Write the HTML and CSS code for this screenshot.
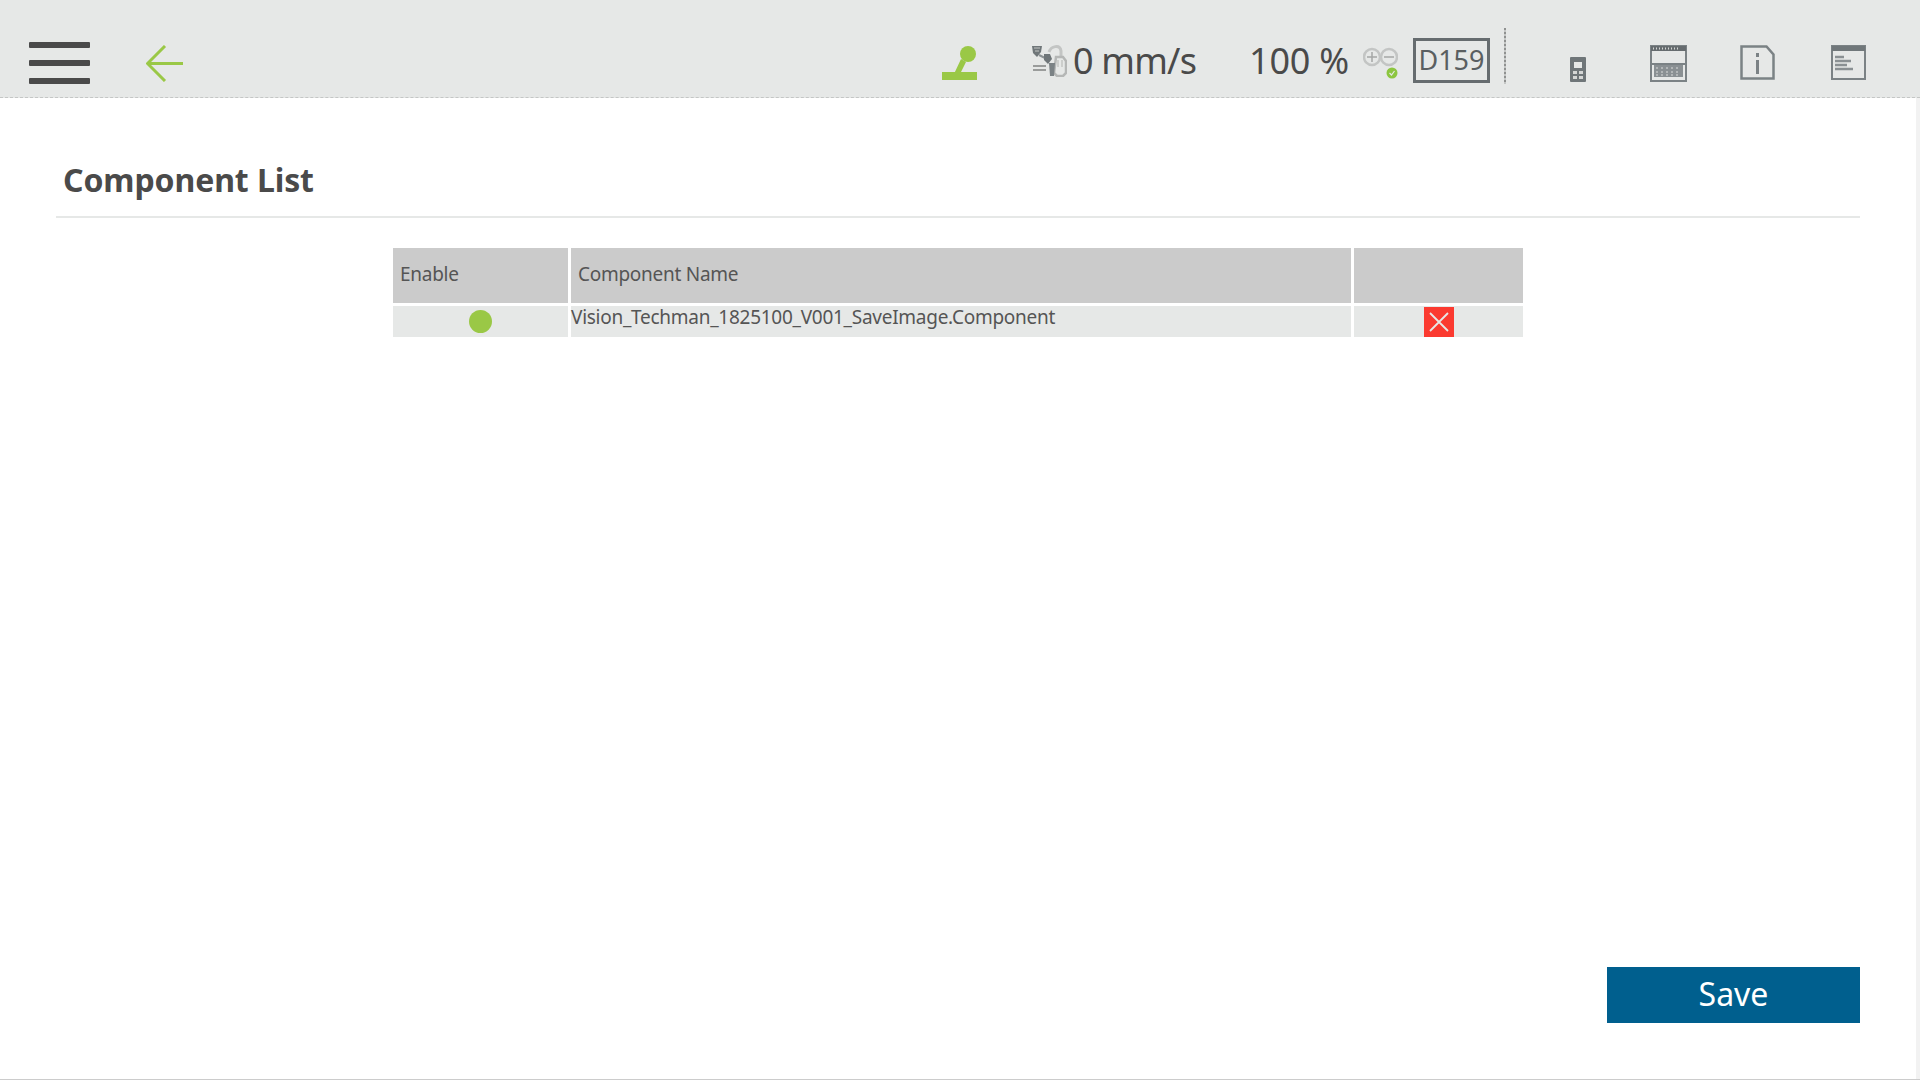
FILE: index.html
```html
<!DOCTYPE html>
<html lang="en">
<head>
<meta charset="utf-8">
<title>Component List</title>
<link rel="stylesheet" href="styles.css">
</head>
<body>
<div class="page">
  <header class="topbar">
    <svg class="ic-menu" width="61" height="42" viewBox="0 0 61 42"><g fill="#4a4a4a"><rect y="0" width="61" height="6" rx="1"/><rect y="18" width="61" height="6" rx="1"/><rect y="36" width="61" height="6" rx="1"/></g></svg>
    <svg class="ic-back" width="38" height="37" viewBox="0 0 38 37"><path d="M37 18.500H2M19 1 1.500 18.500 19 36" fill="none" stroke="#9ac846" stroke-width="3"/></svg>
    <svg class="ic-robot" width="35" height="35" viewBox="0 0 35 35"><g fill="#9ac846"><circle cx="26" cy="8" r="8"/><path d="M19 13l5 3-6 12h-6z"/><rect x="0" y="26" width="35" height="8"/></g></svg>
    <svg class="ic-speed" width="36" height="32" viewBox="0 0 36 32"><g fill="none"><path d="M1 1h10l-1 6-4 5-4-4z" fill="#6f7679"/><path d="M3 3h6M4 6h4" stroke="#c3c5c4"/><path d="M8 10l6 3" stroke="#8a9093" stroke-width="2"/><path d="M13 9h6l2 5-4 5-4-4z" fill="#6f7679"/><path d="M18 7c2-6 11-8 12-1v7" stroke="#c3c5c4" stroke-width="3"/><path d="M25 12h7l3 4v12l-3 3h-6l-3-3z" stroke="#b5b7b6" stroke-width="2.500"/><path d="M27 15v7M31 15v7" stroke="#c3c5c4" stroke-width="1.500"/><path d="M18 18h6l-1 13h-4z" fill="#7b8285"/><path d="M2 21h13M2 25h13" stroke="#9a9c9b" stroke-width="2"/></g></svg>
    <span class="speed">0 mm/s</span>
    <span class="percent">100 %</span>
    <svg class="ic-mode" width="35" height="32" viewBox="0 0 35 32"><g fill="none" stroke="#c3c5c4" stroke-width="2.500"><circle cx="9" cy="10" r="8"/><circle cx="26" cy="10" r="8"/></g><path d="M4 10h10M9 5v10M21 10h10" fill="none" stroke="#a5a7a6" stroke-width="1.500"/><circle cx="29" cy="26" r="5.500" fill="#8cc63f"/><path d="M26.500 26l2 2 3-4" fill="none" stroke="#e6e8e7" stroke-width="1.200"/></svg>
    <span class="code">D159</span>
    <span class="vline"></span>
    <svg class="ic-pendant" width="16" height="25" viewBox="0 0 16 25"><rect width="16" height="25" rx="1" fill="#6f7679"/><rect x="4" y="5" width="8" height="6" fill="#e6e8e7"/><g fill="#d4d6d5"><rect x="3" y="14" width="4" height="3"/><rect x="9" y="14" width="4" height="3"/><rect x="3" y="19" width="4" height="3"/><rect x="9" y="19" width="4" height="3"/></g></svg>
    <svg class="ic-console" width="37" height="37" viewBox="0 0 37 37"><rect x="1" y="1" width="35" height="35" fill="none" stroke="#7b8285" stroke-width="2"/><rect x="1" y="1" width="35" height="5" fill="#666c6f"/><path d="M3 3.500h27" stroke="#d4d6d5" stroke-width="2" stroke-dasharray="1 2"/><rect x="2" y="18" width="33" height="2" fill="#7b8285"/><rect x="4" y="20" width="29" height="12" fill="#8a9093"/><path d="M6 23h25M6 27h25M6 30h25" stroke="#d9dbda" stroke-width="1" stroke-dasharray="2 3"/></svg>
    <svg class="ic-info" width="35" height="35" viewBox="0 0 35 35"><path d="M1.500 1.500h25l7 8v24h-32z" fill="none" stroke="#7b8285" stroke-width="2.500"/><path d="M17.500 8v4M17.500 15v14" stroke="#7b8285" stroke-width="3"/></svg>
    <svg class="ic-log" width="35" height="35" viewBox="0 0 35 35"><rect x="1" y="1" width="33" height="33" fill="none" stroke="#7b8285" stroke-width="2"/><rect x="1" y="1" width="33" height="5" fill="#70777a"/><path d="M4 12h9M4 16h16M4 20h12M4 24h18" stroke="#8a9093" stroke-width="2.500"/></svg>
  </header>
  <main class="content">
    <h1 class="title">Component List</h1>
    <div class="grid">
      <div class="cell head">Enable</div>
      <div class="cell head">Component Name</div>
      <div class="cell head"></div>
      <div class="cell center"><span class="dot"></span></div>
      <div class="cell name">Vision_Techman_1825100_V001_SaveImage.Component</div>
      <div class="cell center bottom"><button class="del" type="button" aria-label="Delete"><svg width="30" height="30" viewBox="0 0 30 30"><path d="M6 6l18 18M24 6 6 24" stroke="#e6e8e7" stroke-width="1.800"/></svg></button></div>
    </div>
    <div class="actions"><button class="save" type="button">Save</button></div>
  </main>
</div>
</body>
</html>
```
FILE: styles.css
```css
* { box-sizing: border-box; }
html, body { margin: 0; height: 100%; }
body { background: #fff; color: #4a4a4a; font-family: "Noto Sans", "Open Sans", sans-serif; overflow: hidden; }
.page { display: flex; flex-direction: column; height: 1080px; border-bottom: 1px solid #ccc; }
.topbar { height: 98px; flex: none; background: #e6e8e7; border-bottom: 1px dashed #c4c6c5; display: flex; align-items: flex-start; }
.topbar svg { flex: none; display: block; }
.ic-menu { margin: 42px 0 0 29px; }
.ic-back { margin: 45px 0 0 56px; }
.ic-robot { margin: 46px 0 0 758px; }
.ic-speed { margin: 45px 0 0 54px; }
.speed { width: 121px; margin: 35px 0 0 6px; font-size: 36px; line-height: 52px; letter-spacing: -0.8px; white-space: nowrap; }
.percent { width: 97px; margin: 35px 0 0 55px; font-size: 36px; line-height: 52px; letter-spacing: -0.2px; white-space: nowrap; }
.ic-mode { margin: 47px 0 0 17px; }
.code { width: 77px; height: 45px; margin: 38px 0 0 15px; border: 3px solid #666c6f; font-size: 27px; line-height: 38px; text-align: center; color: #5a5f61; }
.vline { width: 2px; height: 56px; margin: 28px 0 0 14px; background: repeating-linear-gradient(#8f9190 0 2px, #c4c6c5 2px 4px); }
.ic-pendant { margin: 57px 0 0 64px; }
.ic-console { margin: 45px 0 0 64px; }
.ic-info { margin: 45px 0 0 53px; }
.ic-log { margin: 45px 0 0 56px; }
.content { flex: 1; display: flex; flex-direction: column; padding: 0 56px 56px; border-right: 4px solid #f2f2f2; }
.title { margin: 0; height: 120px; padding: 61px 0 0 7px; border-bottom: 2px solid #e6e8e7; font-size: 32px; line-height: 42px; font-weight: 700; letter-spacing: -0.1px; color: #4a4a4a; }
.grid { margin: 30px 0 0 337px; display: grid; grid-template-columns: 175px 780px 169px; grid-template-rows: 55px 31px; gap: 3px; }
.cell { background: #e6e8e7; font-size: 19px; letter-spacing: -0.27px; color: #555; }
.head { background: #cbcbcb; padding-left: 7px; line-height: 52px; }
.name { line-height: 23px; white-space: nowrap; }
.center { display: flex; justify-content: center; align-items: center; }
.bottom { align-items: flex-end; }
.dot { width: 23px; height: 23px; border-radius: 50%; background: #9ac846; }
.del { width: 30px; height: 30px; padding: 0; border: 0; background: #fb3a30; display: block; }
.del svg { display: block; }
.actions { margin-top: auto; display: flex; justify-content: flex-end; }
.save { width: 253px; height: 56px; border: 0; background: #005f8e; color: #fff; font: 32px/52px "Noto Sans", "Open Sans", sans-serif; padding: 0 0 2px; }
```
